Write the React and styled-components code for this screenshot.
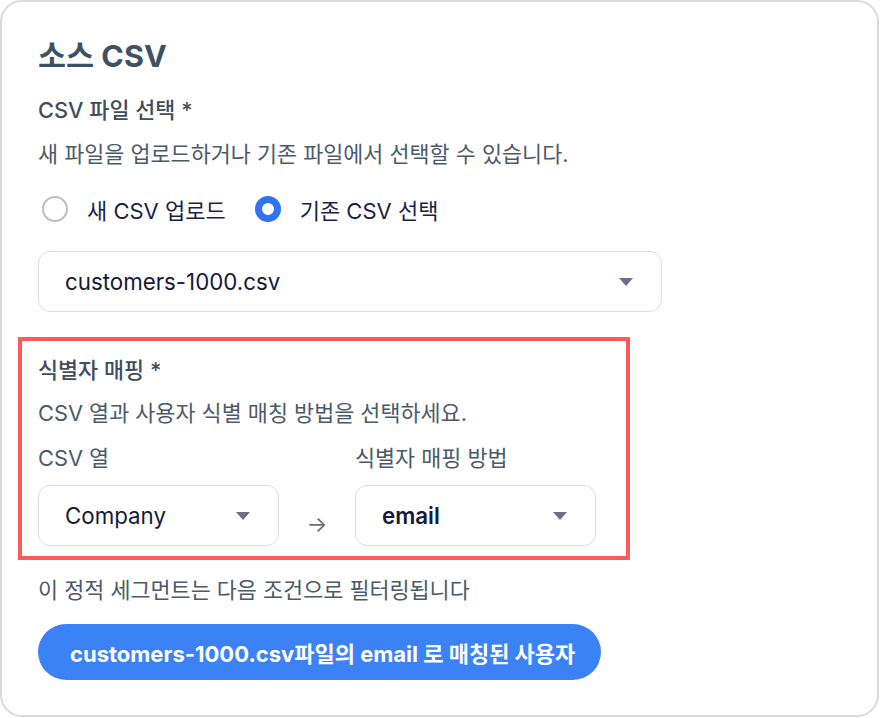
import styled, { createGlobalStyle } from "styled-components";

const GlobalStyle = createGlobalStyle`
  html, body {
    margin: 0;
    padding: 0;
    background: #ffffff;
  }
  body {
    font-family: "Inter", "Noto Sans CJK KR", sans-serif;
  }
  * {
    box-sizing: border-box;
  }
`;

const Card = styled.div`
  width: 879px;
  height: 717px;
  border: 2px solid #dadada;
  border-radius: 22px;
  background: #fff;
  padding: 34px 36px 0 36px;
  display: flex;
  flex-direction: column;
`;

const Title = styled.h2`
  margin: 0;
  font-size: 30.5px;
  line-height: 40px;
  font-weight: 700;
  color: #3e5264;
`;

const FieldLabel = styled.div`
  margin-top: ${(p) => p.$top || 0}px;
  font-size: 21.8px;
  line-height: 28px;
  font-weight: 500;
  color: #404e5c;
`;

const Hint = styled.div`
  margin-top: ${(p) => p.$top || 0}px;
  font-size: 21.8px;
  line-height: 28px;
  font-weight: 400;
  color: #4b5a69;
`;

const RadioRow = styled.div`
  margin-top: 27px;
  height: 28px;
  display: flex;
  align-items: center;
  gap: 29px;
  padding-left: 4px;
`;

const RadioOption = styled.label`
  display: flex;
  align-items: center;
  gap: 19px;
  font-size: 22px;
  color: #1b1f48;
  cursor: pointer;
`;

const RadioDot = styled.span`
  width: 26px;
  height: 26px;
  border-radius: 50%;
  background: #fff;
  border: ${(p) => (p.$checked ? "7px solid #2f74f6" : "2.5px solid #b9bccb")};
`;

const Select = styled.div`
  margin-top: ${(p) => p.$top || 0}px;
  width: ${(p) => p.$width}px;
  height: 61px;
  border: 1px solid #dcdde6;
  border-radius: 12px;
  background: #fff;
  display: flex;
  align-items: center;
  justify-content: space-between;
  padding: 0 28px 0 26px;
  font-size: 22.3px;
  font-weight: ${(p) => p.$weight || 400};
  color: #15193a;
`;

const Caret = styled.span`
  width: 0;
  height: 0;
  border-left: 7px solid transparent;
  border-right: 7px solid transparent;
  border-top: 8px solid #6c6f87;
`;

const Highlight = styled.section`
  margin: 25px 0 0 -20px;
  width: 612px;
  border: 4px solid #ff5a57;
  padding: 15px 16px 10px 16px;
`;

const MappingGrid = styled.div`
  display: grid;
  grid-template-columns: 241px 76px 241px;
  margin-top: 17px;
`;

const MapLabel = styled.div`
  font-size: 21.8px;
  line-height: 28px;
  color: #4b5a69;
`;

const Arrow = styled.div`
  display: flex;
  align-items: flex-end;
  justify-content: center;
  padding-bottom: 9px;
  color: #6b7085;
  font-size: 22px;
`;

const PillButton = styled.button`
  margin-top: 20px;
  align-self: flex-start;
  height: 56px;
  padding: 0 26px 0 32px;
  border: none;
  border-radius: 28px;
  background: #3b82f6;
  color: #fff;
  font-family: inherit;
  font-size: 22px;
  font-weight: 700;
`;

function SelectBox({ value, width, top, weight }) {
  return (
    <Select $width={width} $top={top} $weight={weight}>
      <span>{value}</span>
      <Caret />
    </Select>
  );
}

export default function App() {
  return (
    <>
      <GlobalStyle />
      <Card>
        <Title>소스 CSV</Title>
        <FieldLabel $top={20}>CSV 파일 선택 *</FieldLabel>
        <Hint $top={16}>새 파일을 업로드하거나 기존 파일에서 선택할 수 있습니다.</Hint>
        <RadioRow>
          <RadioOption>
            <RadioDot />
            새 CSV 업로드
          </RadioOption>
          <RadioOption>
            <RadioDot $checked />
            기존 CSV 선택
          </RadioOption>
        </RadioRow>
        <SelectBox value="customers-1000.csv" width={624} top={28} />

        <Highlight>
          <FieldLabel>식별자 매핑 *</FieldLabel>
          <Hint $top={15}>CSV 열과 사용자 식별 매칭 방법을 선택하세요.</Hint>
          <MappingGrid>
            <MapLabel>CSV 열</MapLabel>
            <div />
            <MapLabel>식별자 매핑 방법</MapLabel>
            <SelectBox value="Company" width={241} top={13} />
            <Arrow>→</Arrow>
            <SelectBox value="email" width={241} top={13} weight={600} />
          </MappingGrid>
        </Highlight>

        <Hint $top={16}>이 정적 세그먼트는 다음 조건으로 필터링됩니다</Hint>
        <PillButton>customers-1000.csv파일의 email 로 매칭된 사용자</PillButton>
      </Card>
    </>
  );
}
